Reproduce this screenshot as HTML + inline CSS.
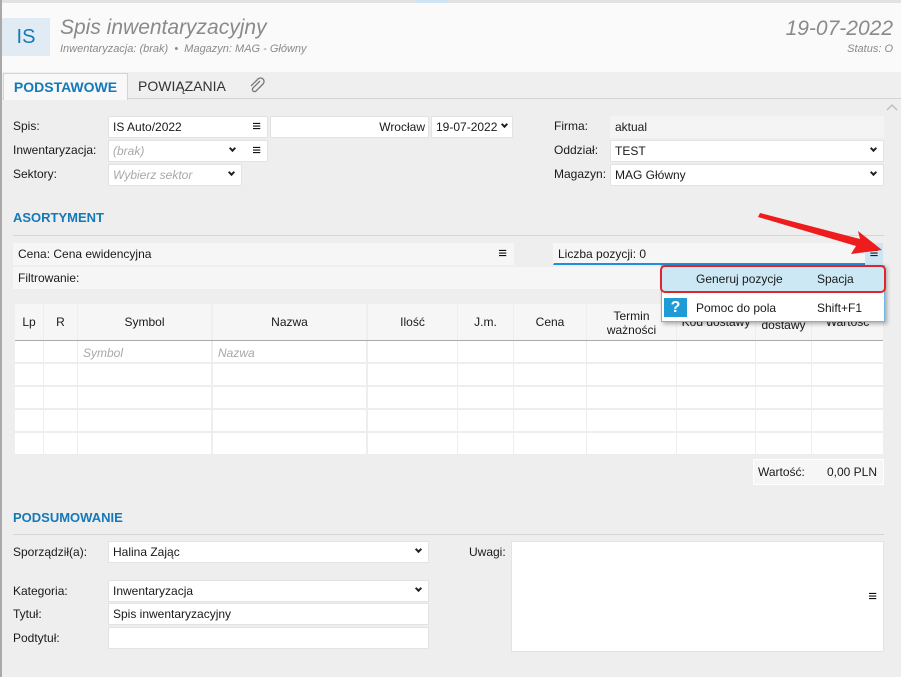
<!DOCTYPE html>
<html><head><meta charset="utf-8"><style>
*{margin:0;padding:0;box-sizing:border-box}
body{width:901px;height:677px;overflow:hidden;background:#eeeeee;font-family:"Liberation Sans","DejaVu Sans",sans-serif;font-size:12px;color:#1a1a1a;position:relative}
.a{position:absolute}
.in{position:absolute;background:#fff;border:1px solid #e3e3e3;height:22px;line-height:20px;padding-left:4px;white-space:nowrap}
.ph{color:#a8a8a8;font-style:italic}
.lbl{position:absolute;line-height:20px}
.chev{position:absolute;right:7px;top:5px;width:5px;height:5px;border-right:2px solid #222;border-bottom:2px solid #222;transform:rotate(45deg)}
.ham{position:absolute;font-size:15px;line-height:20px;color:#111;font-style:normal}
.h2{position:absolute;color:#1479b8;font-weight:bold;font-size:13px}
.hr{position:absolute;height:1px;background:#d6d6d6}
.th{position:absolute;background:#f6f6f6;text-align:center;font-size:12px;line-height:14px}
</style></head><body>
<div class="a" style="left:0;top:0;width:901px;height:3px;background:#e2e2e2"></div>
<div class="a" style="left:416px;top:0;width:32px;height:3px;background:#cfe3f2"></div>
<div class="a" style="left:0;top:3px;width:901px;height:69px;background:#fafafa"></div>
<div class="a" style="left:0;top:0;width:2px;height:677px;background:#a9a9a9"></div>
<div class="a" style="left:2px;top:18px;width:48px;height:38px;background:#e1ebf4;color:#1479b8;font-size:20px;line-height:38px;text-align:center">IS</div>
<div class="a" style="left:60px;top:16px;font-size:21px;font-style:italic;color:#8a8a8a">Spis inwentaryzacyjny</div>
<div class="a" style="left:60px;top:43px;font-size:11px;font-style:italic;color:#8a8a8a">Inwentaryzacja: (brak) &nbsp;•&nbsp; Magazyn: MAG - Główny</div>
<div class="a" style="right:8px;top:17px;font-size:21px;font-style:italic;color:#8a8a8a">19-07-2022</div>
<div class="a" style="right:8px;top:43px;font-size:11px;font-style:italic;color:#8a8a8a">Status: O</div>
<div class="a" style="left:2px;top:72px;width:899px;height:27px;background:#efefef;border-bottom:1px solid #d4d4d4"></div>
<div class="a" style="left:3px;top:73px;width:125px;height:27px;background:#f8f8f8;border:1px solid #d4d4d4;border-bottom:none;color:#1479b8;font-weight:bold;font-size:14px;line-height:26px;text-align:center">PODSTAWOWE</div>
<div class="a" style="left:138px;top:73px;font-size:14px;line-height:26px;color:#333">POWIĄZANIA</div>
<svg class="a" style="left:248px;top:77px" width="18" height="18" viewBox="0 0 18 18"><path d="M12 4 L5 11 A2 2 0 0 0 8 14 L15 7 A3.5 3.5 0 0 0 10 2 L3 9" fill="none" stroke="#777" stroke-width="1.3"/></svg>
<svg class="a" style="left:886px;top:104px" width="12" height="8"><path d="M1 6 L6 1 L11 6" fill="none" stroke="#bbb" stroke-width="1.3"/></svg>

<div class="lbl" style="left:13px;top:116px">Spis:</div>
<div class="in" style="left:108px;top:116px;width:160px">IS Auto/2022<span class="ham" style="right:6px;top:0">≡</span></div>
<div class="in" style="left:270px;top:116px;width:159px;text-align:right;padding-right:3px">Wrocław</div>
<div class="in" style="left:431px;top:116px;width:82px">19-07-2022<span class="chev" style="right:5px"></span></div>
<div class="lbl" style="left:13px;top:140px">Inwentaryzacja:</div>
<div class="in ph" style="left:108px;top:140px;width:160px">(brak)<span class="chev" style="right:32px"></span><span class="ham" style="right:6px;top:0">≡</span></div>
<div class="lbl" style="left:13px;top:164px">Sektory:</div>
<div class="in ph" style="left:108px;top:164px;width:134px">Wybierz sektor<span class="chev"></span></div>
<div class="lbl" style="left:554px;top:116px">Firma:</div>
<div class="in" style="left:610px;top:116px;width:274px;background:#f4f4f4;border-color:#f4f4f4">aktual</div>
<div class="lbl" style="left:554px;top:140px">Oddział:</div>
<div class="in" style="left:610px;top:140px;width:274px">TEST<span class="chev"></span></div>
<div class="lbl" style="left:554px;top:164px">Magazyn:</div>
<div class="in" style="left:610px;top:164px;width:274px">MAG Główny<span class="chev"></span></div>

<div class="h2" style="left:13px;top:210px">ASORTYMENT</div>
<div class="hr" style="left:13px;top:235px;width:871px"></div>
<div class="in" style="left:13px;top:243px;width:501px;background:#f6f6f6;border-color:#f6f6f6">Cena: Cena ewidencyjna<span class="ham" style="right:6px;top:0">≡</span></div>
<div class="in" style="left:553px;top:243px;width:313px;background:#f6f6f6;border-color:#f6f6f6;border-bottom:2px solid #1e90d8">Liczba pozycji: 0</div>
<div class="a" style="left:865px;top:243px;width:18px;height:22px;background:#cde6f3;text-align:center;line-height:22px;font-size:15px">≡</div>
<div class="in" style="left:13px;top:267px;width:660px;background:#f6f6f6;border-color:#f6f6f6">Filtrowanie:</div>

<div class="th" style="left:15px;top:304px;width:28px;height:36px;line-height:36px">Lp</div>
<div class="th" style="left:44px;top:304px;width:33px;height:36px;line-height:36px">R</div>
<div class="th" style="left:78px;top:304px;width:133px;height:36px;line-height:36px">Symbol</div>
<div class="th" style="left:213px;top:304px;width:153px;height:36px;line-height:36px">Nazwa</div>
<div class="th" style="left:368px;top:304px;width:89px;height:36px;line-height:36px">Ilość</div>
<div class="th" style="left:458px;top:304px;width:55px;height:36px;line-height:36px">J.m.</div>
<div class="th" style="left:514px;top:304px;width:72px;height:36px;line-height:36px">Cena</div>
<div class="th" style="left:587px;top:304px;width:89px;height:36px;padding-top:5px">Termin<br>ważności</div>
<div class="th" style="left:677px;top:304px;width:78px;height:36px;padding-top:11px">Kod dostawy</div>
<div class="th" style="left:756px;top:304px;width:55px;height:36px;padding-top:14px">dostawy</div>
<div class="th" style="left:812px;top:304px;width:71px;height:36px;padding-top:11px">Wartość</div>
<div class="a" style="left:15px;top:340px;width:868px;height:1px;background:#aaa"></div>
<div class="a" style="left:15px;top:341px;width:868px;height:114px;background:repeating-linear-gradient(#fff 0 21px,#eee 21px 23px)"></div>
<div class="a" style="left:15px;top:341px;width:868px;height:114px;background:repeating-linear-gradient(90deg,transparent 0 28px,#eee 28px 29px,transparent 29px 62px,#eee 62px 63px,transparent 63px 196px,#eee 196px 198px,transparent 198px 351px,#eee 351px 353px,transparent 353px 442px,#eee 442px 443px,transparent 443px 498px,#eee 498px 499px,transparent 499px 571px,#eee 571px 572px,transparent 572px 661px,#eee 661px 662px,transparent 662px 740px,#eee 740px 741px,transparent 741px 796px,#eee 796px 797px,transparent 797px 868px)"></div>
<div class="a ph" style="left:83px;top:346px">Symbol</div>
<div class="a ph" style="left:218px;top:346px">Nazwa</div>
<div class="in" style="left:753px;top:459px;width:131px;height:26px;line-height:24px;background:#f6f6f6;border-color:#fff"><span>Wartość:</span><span style="position:absolute;right:6px">0,00 PLN</span></div>

<div class="h2" style="left:13px;top:510px">PODSUMOWANIE</div>
<div class="hr" style="left:13px;top:534px;width:871px"></div>
<div class="lbl" style="left:13px;top:542px">Sporządził(a):</div>
<div class="in" style="left:108px;top:541px;width:321px">Halina Zając<span class="chev"></span></div>
<div class="lbl" style="left:13px;top:581px">Kategoria:</div>
<div class="in" style="left:108px;top:580px;width:321px">Inwentaryzacja<span class="chev"></span></div>
<div class="lbl" style="left:13px;top:604px">Tytuł:</div>
<div class="in" style="left:108px;top:603px;width:321px">Spis inwentaryzacyjny</div>
<div class="lbl" style="left:13px;top:628px">Podtytuł:</div>
<div class="in" style="left:108px;top:627px;width:321px"></div>
<div class="lbl" style="left:469px;top:542px">Uwagi:</div>
<div class="a" style="left:511px;top:541px;width:373px;height:111px;background:#fff;border:1px solid #e3e3e3"><span class="ham" style="right:6px;top:45px">≡</span></div>

<div class="a" style="left:661px;top:265px;width:224px;height:57px;background:#fff;border:1px solid #6fb6e3;box-shadow:2px 2px 4px rgba(0,0,0,.3)"></div>
<div class="a" style="left:660px;top:265px;width:226px;height:28px;background:#cde8f5;border:2px solid #e0262a;border-radius:5px"></div>
<div class="a" style="left:696px;top:272px">Generuj pozycje</div>
<div class="a" style="left:817px;top:272px">Spacja</div>
<div class="a" style="left:664px;top:298px;width:23px;height:19px;background:#1f9bd6;color:#fff;font-weight:bold;font-size:16px;text-align:center;line-height:19px">?</div>
<div class="a" style="left:696px;top:301px">Pomoc do pola</div>
<div class="a" style="left:817px;top:301px">Shift+F1</div>

<svg class="a" style="left:755px;top:205px" width="135" height="55"><path d="M5 8 L105 34 L103 26 L127 45 L96 49 L101 41 L3 12 Z" fill="#ee1c1c"/></svg>
</body></html>
